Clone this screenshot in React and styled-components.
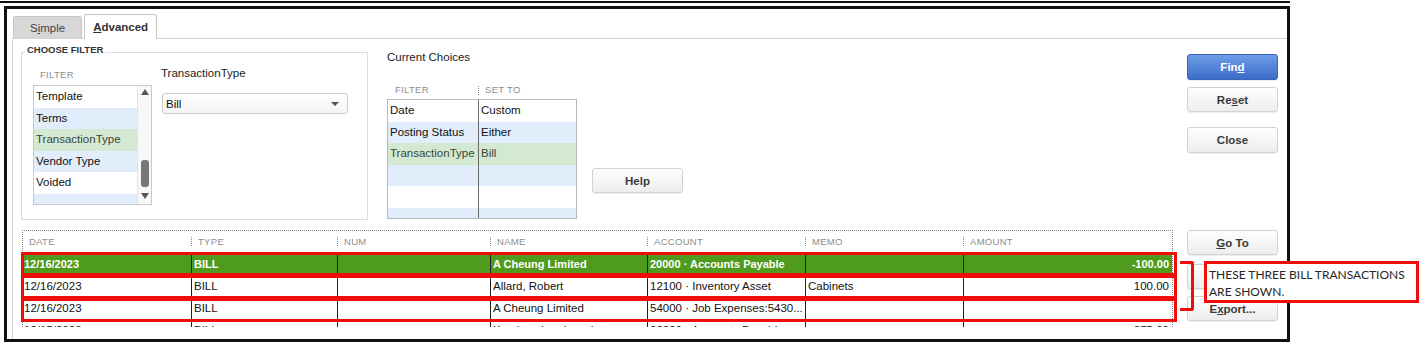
import React from 'react';
import styled, { createGlobalStyle, css } from 'styled-components';

const GlobalStyle = createGlobalStyle`
  body {
    margin: 0;
    background: #fff;
    font-family: "Liberation Sans", Arial, sans-serif;
  }
`;

const Screen = styled.div`
  width: 1428px;
  height: 346px;
  padding-top: 1px;
  box-sizing: border-box;
  overflow: hidden;
  background: #fff;
`;

const TopRule = styled.div`
  width: 1290px;
  height: 2px;
  background: #111;
`;

const Frame = styled.div`
  width: 1286px;
  height: 336px;
  margin: 3px 0 0 4px;
  border: 3px solid #111;
  box-sizing: border-box;
  display: flex;
  flex-direction: column;
`;

const TabBar = styled.div`
  height: 29px;
  padding-left: 6px;
  display: flex;
  align-items: flex-end;
`;

const Tab = styled.div`
  height: 22px;
  padding: 0 16px;
  display: flex;
  align-items: center;
  font-size: 11.5px;
  color: #444;
  background: #d7d7d7;
  border: 1px solid #c4c4c4;
  border-bottom: none;
  border-radius: 3px 3px 0 0;
  box-sizing: border-box;
  ${p => p.$active && css`
    height: 25px;
    margin-left: 2px;
    margin-bottom: -1px;
    padding: 0 8px;
    background: #fff;
    font-weight: bold;
    color: #333;
    position: relative;
  `}
`;

const Panel = styled.div`
  flex: 1;
  margin-left: 5px;
  border-top: 1px solid #d2d2d2;
  border-left: 1px solid #d2d2d2;
  padding: 0 9px 0 8px;
`;

const TopRow = styled.div`
  height: 191px;
  display: flex;
  align-items: flex-start;
`;

const FilterBox = styled.fieldset`
  margin: 6px 0 0;
  padding: 0;
  width: 347px;
  height: 175px;
  box-sizing: border-box;
  border: 1px solid #dcdcdc;
  display: flex;
  align-items: flex-start;
`;

const Legend = styled.legend`
  margin-left: 3px;
  padding: 0 2px 4px;
  font-size: 9.5px;
  line-height: 10px;
  font-weight: bold;
  color: #333;
`;

const FilterBody = styled.div`
  display: flex;
  align-items: flex-start;
  padding-left: 11px;
`;

const Column = styled.div`
  display: flex;
  flex-direction: column;
  margin-left: ${p => p.$ml || 0}px;
  margin-top: ${p => p.$mt || 0}px;
`;

const SmallLabel = styled.div`
  font-size: 9.5px;
  line-height: 10px;
  letter-spacing: 0.3px;
  color: #8d8d8d;
  margin-top: ${p => p.$mt || 0}px;
  padding-left: ${p => p.$pl || 0}px;
`;

const Label = styled.div`
  font-size: 11.5px;
  line-height: 14px;
  color: #222;
  margin-top: ${p => p.$mt || 0}px;
`;

const ListBox = styled.div`
  margin-top: 5px;
  width: 119px;
  height: 120px;
  box-sizing: border-box;
  border: 1px solid #c9c9c9;
  display: flex;
  overflow: hidden;
`;

const ListRows = styled.div`
  flex: 1;
`;

const ListRow = styled.div`
  height: 21.5px;
  line-height: 21.5px;
  padding-left: 2px;
  font-size: 11.5px;
  color: #111;
  white-space: nowrap;
  background: ${p => (p.$tone === 'blue' ? '#e2edfc' : p.$tone === 'green' ? '#d4e9d2' : '#fff')};
  ${p => p.$tone === 'green' && css`color: #3b473a;`}
`;

const ScrollTrack = styled.div`
  width: 13px;
  border-left: 1px solid #e2e2e2;
  background: #f8f8f8;
  display: flex;
  flex-direction: column;
  align-items: center;
`;

const Arrow = styled.div`
  width: 0;
  height: 0;
  border-left: 4px solid transparent;
  border-right: 4px solid transparent;
  ${p => (p.$down
    ? css`border-top: 6px solid #555; margin-top: 6px;`
    : css`border-bottom: 6px solid #555; margin-top: 3px;`)}
`;

const Thumb = styled.div`
  width: 8px;
  height: 27px;
  margin-top: 65px;
  border-radius: 3px;
  background: #777;
`;

const Select = styled.div`
  margin-top: 13px;
  margin-left: 1px;
  width: 186px;
  height: 21px;
  box-sizing: border-box;
  border: 1px solid #cbcbcb;
  border-radius: 3px;
  background: linear-gradient(#fff, #f4f4f4);
  display: flex;
  align-items: center;
  justify-content: space-between;
  padding: 0 8px 0 3px;
  font-size: 11.5px;
  color: #111;
`;

const Caret = styled.span`
  width: 0;
  height: 0;
  border-left: 4px solid transparent;
  border-right: 4px solid transparent;
  border-top: 4px solid #555;
`;

const ChoiceHead = styled.div`
  margin-top: 21px;
  display: flex;
  height: 10px;
`;

const HeadCell = styled.div`
  width: ${p => p.$w ? `${p.$w}px` : 'auto'};
  flex: ${p => p.$w ? 'none' : 1};
  display: flex;
  align-items: center;
  font-size: 9.5px;
  line-height: 10px;
  letter-spacing: 0.3px;
  color: #8d8d8d;
  padding-left: ${p => p.$pl || 0}px;
  box-sizing: border-box;
  white-space: nowrap;
`;

const Sep = styled.span`
  display: inline-block;
  height: 9px;
  border-left: 1px dotted #8a8a8a;
  margin-right: 6px;
`;

const ChoiceTable = styled.div`
  margin-top: 4px;
  width: 190px;
  height: 120px;
  box-sizing: border-box;
  border: 1px solid #b8b8b8;
  overflow: hidden;
`;

const ChoiceRow = styled.div`
  display: flex;
  height: 21.5px;
  line-height: 21.5px;
  font-size: 11.5px;
  color: #111;
  background: ${p => (p.$tone === 'blue' ? '#e2edfc' : p.$tone === 'green' ? '#d4e9d2' : '#fff')};
  ${p => p.$tone === 'green' && css`color: #3b473a;`}
`;

const ChoiceCell = styled.div`
  width: ${p => p.$w ? `${p.$w}px` : 'auto'};
  flex: ${p => p.$w ? 'none' : 1};
  padding-left: 2px;
  box-sizing: border-box;
  white-space: nowrap;
  overflow: hidden;
  ${p => p.$divider && css`border-right: 1px solid #6a6a6a;`}
`;

const Button = styled.button`
  display: block;
  width: 91px;
  height: ${p => p.$h || 25}px;
  margin-top: ${p => p.$mt || 0}px;
  margin-left: ${p => p.$ml || 0}px;
  padding: 0;
  border: 1px solid #d2d2d2;
  border-radius: 3px;
  background: linear-gradient(#fefefe, #ededed);
  box-shadow: 0 1px 1px rgba(0, 0, 0, 0.07);
  font: bold 11.5px "Liberation Sans", Arial, sans-serif;
  color: #3a3a3a;
  u { text-decoration: underline; }
  ${p => p.$primary && css`
    background: linear-gradient(#6e9de7, #3d6ccb);
    border-color: #3a64b5;
    color: #fff;
  `}
`;

const ButtonCol = styled.div`
  margin-left: auto;
  margin-top: ${p => p.$mt || 0}px;
  display: flex;
  flex-direction: column;
`;

const BottomRow = styled.div`
  position: relative;
  display: flex;
  align-items: flex-start;
`;

const TableWrap = styled.div`
  margin-left: 1px;
  width: 1151px;
  height: 97px;
  box-sizing: border-box;
  border-top: 1px dotted #8a8a8a;
  border-left: 1px dotted #8a8a8a;
  border-right: 1px dotted #8a8a8a;
  overflow: hidden;
`;

const HeaderRow = styled.div`
  display: flex;
  height: 21px;
  border-bottom: 1px solid #a8a8a8;
`;

const DataRow = styled.div`
  display: flex;
  height: 22px;
  line-height: 22px;
  font-size: 11.5px;
  color: #111;
  ${p => p.$selected && css`
    background: #4f9b1d;
    color: #fff;
    font-weight: bold;
    font-size: 11px;
  `}
`;

const DataCell = styled.div`
  width: ${p => p.$w ? `${p.$w}px` : 'auto'};
  flex: ${p => p.$w ? 'none' : 1};
  box-sizing: border-box;
  padding: 0 3px 0 ${p => (p.$first ? 1 : 2)}px;
  white-space: nowrap;
  overflow: hidden;
  text-align: ${p => (p.$right ? 'right' : 'left')};
  ${p => !p.$first && css`border-left: 1px solid #222;`}
`;

const RowMark = styled.div`
  position: absolute;
  left: 0;
  top: ${p => 22 + p.$row * 23}px;
  width: 1156px;
  height: 24px;
  box-sizing: border-box;
  border: 3px solid #f20d0d;
  pointer-events: none;
`;

const Bracket = styled.div`
  position: absolute;
  left: 1159px;
  top: 31px;
  width: 14px;
  height: 50px;
  box-sizing: border-box;
  border: 3px solid #f20d0d;
  border-left: none;
  border-radius: 0 3px 3px 0;
`;

const Callout = styled.div`
  position: absolute;
  left: 1183px;
  top: 31px;
  width: 215px;
  height: 42px;
  box-sizing: border-box;
  border: 3px solid #f20d0d;
  background: #fff;
  padding: 2px 2px 0;
  font-family: Lato, "Liberation Sans", sans-serif;
  font-size: 12px;
  line-height: 17px;
  color: #262626;
`;

const columns = [
  { key: 'date', label: 'DATE', w: 168 },
  { key: 'type', label: 'TYPE', w: 146 },
  { key: 'num', label: 'NUM', w: 153 },
  { key: 'name', label: 'NAME', w: 157 },
  { key: 'account', label: 'ACCOUNT', w: 158 },
  { key: 'memo', label: 'MEMO', w: 158 },
  { key: 'amount', label: 'AMOUNT', right: true },
];

const rows = [
  { date: '12/16/2023', type: 'BILL', num: '', name: 'A Cheung Limited', account: '20000 · Accounts Payable', memo: '', amount: '-100.00', selected: true },
  { date: '12/16/2023', type: 'BILL', num: '', name: 'Allard, Robert', account: '12100 · Inventory Asset', memo: 'Cabinets', amount: '100.00' },
  { date: '12/16/2023', type: 'BILL', num: '', name: 'A Cheung Limited', account: '54000 · Job Expenses:5430...', memo: '', amount: '' },
  { date: '12/15/2023', type: 'BILL', num: '', name: 'Kershaw Landscaping', account: '20000 · Accounts Payable', memo: '', amount: '-275.00' },
];

const filters = [
  { label: 'Template' },
  { label: 'Terms', tone: 'blue' },
  { label: 'TransactionType', tone: 'green' },
  { label: 'Vendor Type', tone: 'blue' },
  { label: 'Voided' },
  { label: '', tone: 'blue' },
];

const choices = [
  { filter: 'Date', value: 'Custom' },
  { filter: 'Posting Status', value: 'Either', tone: 'blue' },
  { filter: 'TransactionType', value: 'Bill', tone: 'green' },
  { filter: '', value: '', tone: 'blue' },
  { filter: '', value: '' },
  { filter: '', value: '', tone: 'blue' },
];

export default function App() {
  return (
    <Screen>
      <GlobalStyle />
      <TopRule />
      <Frame>
        <TabBar>
          <Tab>S<u>i</u>mple</Tab>
          <Tab $active><u>A</u>dvanced</Tab>
        </TabBar>
        <Panel>
          <TopRow>
            <FilterBox>
              <Legend>CHOOSE FILTER</Legend>
              <FilterBody>
                <Column>
                  <SmallLabel $mt={11} $pl={7}>FILTER</SmallLabel>
                  <ListBox>
                    <ListRows>
                      {filters.map((f, i) => (
                        <ListRow key={i} $tone={f.tone}>{f.label}</ListRow>
                      ))}
                    </ListRows>
                    <ScrollTrack>
                      <Arrow />
                      <Thumb />
                      <Arrow $down />
                    </ScrollTrack>
                  </ListBox>
                </Column>
                <Column $ml={9}>
                  <Label $mt={7}>TransactionType</Label>
                  <Select>
                    Bill
                    <Caret />
                  </Select>
                </Column>
              </FilterBody>
            </FilterBox>

            <Column $ml={19}>
              <Label $mt={11}>Current Choices</Label>
              <ChoiceHead>
                <HeadCell $w={91} $pl={8}>FILTER</HeadCell>
                <HeadCell><Sep />SET TO</HeadCell>
              </ChoiceHead>
              <ChoiceTable>
                {choices.map((c, i) => (
                  <ChoiceRow key={i} $tone={c.tone}>
                    <ChoiceCell $w={91} $divider>{c.filter}</ChoiceCell>
                    <ChoiceCell>{c.value}</ChoiceCell>
                  </ChoiceRow>
                ))}
              </ChoiceTable>
            </Column>

            <Button $mt={129} $ml={15}>Help</Button>

            <ButtonCol $mt={15}>
              <Button $primary $h={26}>Fin<u>d</u></Button>
              <Button $mt={7}>Re<u>s</u>et</Button>
              <Button $mt={15} $h={26}>Close</Button>
            </ButtonCol>
          </TopRow>

          <BottomRow>
            <TableWrap>
              <HeaderRow>
                {columns.map((c, i) => (
                  <HeadCell key={c.key} $w={c.w} $pl={i === 0 ? 6 : 0}>
                    {i > 0 && <Sep />}
                    {c.label}
                  </HeadCell>
                ))}
              </HeaderRow>
              {rows.map((r, ri) => (
                <DataRow key={ri} $selected={r.selected}>
                  {columns.map((c, i) => (
                    <DataCell key={c.key} $w={c.w} $first={i === 0} $right={c.right}>
                      {r[c.key]}
                    </DataCell>
                  ))}
                </DataRow>
              ))}
            </TableWrap>

            <ButtonCol>
              <Button><u>G</u>o To</Button>
              {/* covered by the callout in the screenshot */}
              <Button $mt={9} aria-label="Report" />
              <Button $mt={7}>E<u>x</u>port...</Button>
            </ButtonCol>

            {[0, 1, 2].map(i => <RowMark key={i} $row={i} />)}
            <Bracket />
            <Callout>
              THESE THREE BILL TRANSACTIONS
              <br />
              ARE SHOWN.
            </Callout>
          </BottomRow>
        </Panel>
      </Frame>
    </Screen>
  );
}
